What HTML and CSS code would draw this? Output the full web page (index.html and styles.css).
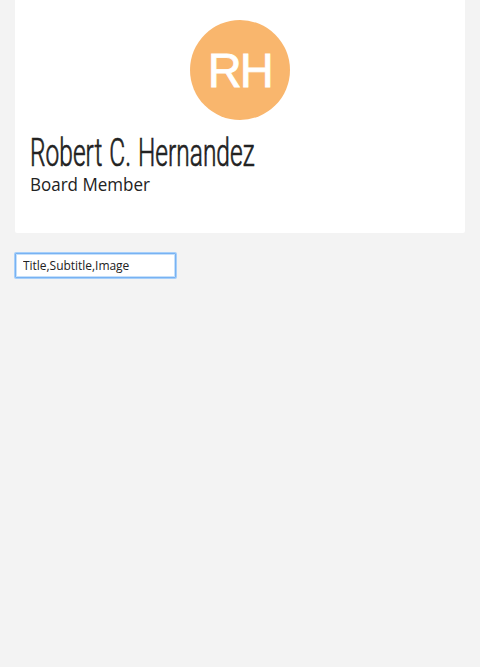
FILE: index.html
```html
<!DOCTYPE html>
<html lang="en">
<head>
<meta charset="utf-8">
<title>Profile card</title>
<link rel="stylesheet" href="styles.css">
</head>
<body>
<main class="page">
  <section class="card">
    <div class="avatar"><span class="initials">RH</span></div>
    <h1 class="title"><span class="title-text">Robert C. Hernandez</span></h1>
    <p class="subtitle"><span class="subtitle-text">Board Member</span></p>
  </section>
  <div class="field-frame">
    <input class="fields" type="text" value="Title,Subtitle,Image" aria-label="Fields">
  </div>
</main>
</body>
</html>
```
FILE: styles.css
```css
* { box-sizing: border-box; }
body { margin: 0; background: #f3f3f3; color: #222; font-family: "Open Sans", sans-serif; }
.page { padding: 0 15px; }
.card { height: 233px; padding: 20px 15px; background: #fff; border-radius: 0 0 2px 2px; }
.avatar { width: 100px; height: 100px; margin: 0 auto; border-radius: 50%; background: #f9b66d; color: #fff; display: flex; align-items: center; justify-content: center; font: 48px/102px "Liberation Sans", sans-serif; }
.initials { letter-spacing: -2px; margin-right: 1px; -webkit-text-stroke: .8px #fff; transform: translateY(.5px) scaleX(.98); }
.title { margin: 14px 0 0; height: 39px; font: 300 38px/38px Roboto, sans-serif; white-space: nowrap; }
.title-text { display: inline-block; transform: scaleX(.645); transform-origin: 0 50%; word-spacing: 1.5px; -webkit-text-stroke: .7px #222; }
.subtitle { margin: 0; font-size: 18px; line-height: 22px; white-space: nowrap; }
.subtitle-text { display: inline-block; transform: scaleX(.945); transform-origin: 0 50%; }
.field-frame { width: 163px; height: 27px; margin: 19px 0 0 -1px; padding: 1px; border-radius: 2px; background: #a6cffa; }
.fields { display: block; width: 161px; height: 25px; margin: 0; padding: 0 7px; border: 1px solid #78b2f2; border-radius: 1px; outline: 0; box-shadow: inset 0 0 0 1px #c5e0fb; background: #fff; color: #222; font: 12px "Open Sans", sans-serif; letter-spacing: -.03px; }
```
